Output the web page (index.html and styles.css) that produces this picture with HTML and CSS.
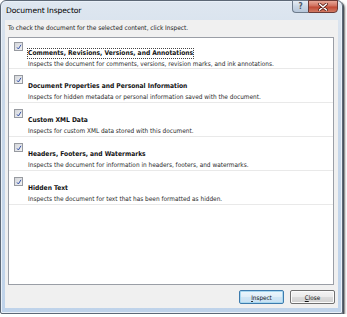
FILE: index.html
```html
<!DOCTYPE html>
<html>
<head>
  <meta charset="utf-8">
  <link rel="stylesheet" href="styles.css">
</head>
<body>
  <div class="window">
    <!-- Title bar -->
    <div class="titlebar">
      <span class="caption">Document Inspector</span>
      <div class="caption-buttons">
        <span class="cap-btn help">?</span>
        <span class="cap-btn close">
          <svg width="10" height="8" viewBox="0 0 10 8">
            <path d="M1.5 1 L8.5 7 M8.5 1 L1.5 7" stroke="#5a1c14" stroke-width="3" stroke-linecap="round"/>
            <path d="M1.5 1 L8.5 7 M8.5 1 L1.5 7" stroke="#fff" stroke-width="1.6" stroke-linecap="round"/>
          </svg>
        </span>
      </div>
    </div>

    <div class="client">
      <p class="intro">To check the document for the selected content, click Inspect.</p>

      <div class="listbox">
        <div class="item">
          <span class="check"><svg width="6" height="6" viewBox="0 0 6 6"><path d="M1 3.4 L2.4 5 L5 0.8" fill="none" stroke="#3552a8" stroke-width="1"/></svg></span>
          <div class="item-text">
            <div class="name focused">Comments, Revisions, Versions, and Annotations</div>
            <div class="desc">Inspects the document for comments, versions, revision marks, and ink annotations.</div>
          </div>
        </div>
        <div class="item">
          <span class="check"><svg width="6" height="6" viewBox="0 0 6 6"><path d="M1 3.4 L2.4 5 L5 0.8" fill="none" stroke="#3552a8" stroke-width="1"/></svg></span>
          <div class="item-text">
            <div class="name">Document Properties and Personal Information</div>
            <div class="desc">Inspects for hidden metadata or personal information saved with the document.</div>
          </div>
        </div>
        <div class="item">
          <span class="check"><svg width="6" height="6" viewBox="0 0 6 6"><path d="M1 3.4 L2.4 5 L5 0.8" fill="none" stroke="#3552a8" stroke-width="1"/></svg></span>
          <div class="item-text">
            <div class="name">Custom XML Data</div>
            <div class="desc">Inspects for custom XML data stored with this document.</div>
          </div>
        </div>
        <div class="item">
          <span class="check"><svg width="6" height="6" viewBox="0 0 6 6"><path d="M1 3.4 L2.4 5 L5 0.8" fill="none" stroke="#3552a8" stroke-width="1"/></svg></span>
          <div class="item-text">
            <div class="name">Headers, Footers, and Watermarks</div>
            <div class="desc">Inspects the document for information in headers, footers, and watermarks.</div>
          </div>
        </div>
        <div class="item">
          <span class="check"><svg width="6" height="6" viewBox="0 0 6 6"><path d="M1 3.4 L2.4 5 L5 0.8" fill="none" stroke="#3552a8" stroke-width="1"/></svg></span>
          <div class="item-text">
            <div class="name">Hidden Text</div>
            <div class="desc">Inspects the document for text that has been formatted as hidden.</div>
          </div>
        </div>
      </div>

      <div class="buttons">
        <button class="btn default"><u>I</u>nspect</button>
        <button class="btn"><u>C</u>lose</button>
      </div>
    </div>
  </div>
</body>
</html>
```

FILE: styles.css
```css
body {
  margin: 0;
  background: #fff;
  font-family: "DejaVu Sans Condensed", "DejaVu Sans", sans-serif;
}

.window {
  width: 343px;
  height: 314px;
  box-sizing: border-box;
  padding: 0 4px 5px 4px;
  border: 1px solid #5d6876;
  border-radius: 6px 6px 2px 2px;
  background: linear-gradient(#dfe7f0, #c9d8e9 30%, #bfd3ea);
  box-shadow: inset 0 0 0 1px #e9f0f8, 1px 1px 0 #4a525c, 2px 2px 2px rgba(0, 0, 0, 0.55);
  display: flex;
  flex-direction: column;
}

/* Title bar */
.titlebar {
  height: 19px;
  display: flex;
  align-items: flex-start;
  justify-content: space-between;
}

.caption {
  font-family: "DejaVu Sans", sans-serif;
  font-size: 7.6px;
  color: #000;
  line-height: 19px;
  padding-left: 1px;
  letter-spacing: -0.1px;
}

.caption-buttons {
  display: flex;
  margin-top: -1px;
}

.cap-btn {
  height: 13px;
  display: flex;
  align-items: center;
  justify-content: center;
  box-sizing: border-box;
  border: 1px solid #6e7c8c;
}

.help {
  width: 16px;
  border-right: none;
  border-radius: 0 0 0 4px;
  background: linear-gradient(#e6edf5, #c9d6e4 50%, #b7c7da);
  font-size: 8px;
  color: #4c5868;
  font-weight: bold;
}

.close {
  width: 30px;
  border-color: #6b3a36;
  border-radius: 0 0 4px 0;
  background: linear-gradient(#e8a898, #d0705e 45%, #c04a35 55%, #d27a64);
}

/* Client area */
.client {
  flex: 1;
  background: #f0f0f0;
  padding: 0 4px 4px 3px;
  display: flex;
  flex-direction: column;
}

.intro {
  margin: 0;
  line-height: 17px;
  font-size: 6.45px;
  color: #1a1a1a;
}

.listbox {
  height: 248px;
  box-sizing: border-box;
  background: #fff;
  border: 1px solid #9a9ea6;
}

.item {
  height: 34px;
  box-sizing: border-box;
  padding: 4px 0 0 5px;
  border-bottom: 1px solid #e9e9e9;
  display: flex;
  align-items: flex-start;
  gap: 4px;
}

.item:first-child {
  height: 31px;
  padding-top: 2px;
}

.check {
  width: 9px;
  height: 9px;
  box-sizing: border-box;
  margin-top: 2px;
  border: 1px solid #979aa0;
  background: linear-gradient(135deg, #d4d6da, #f2f3f5);
  display: flex;
  align-items: center;
  justify-content: center;
}

.name {
  font-size: 6.65px;
  font-weight: bold;
  line-height: 12px;
  height: 12px;
  color: #111;
  display: inline-block;
  padding: 0 1px;
  box-sizing: border-box;
}

.name.focused {
  outline: 1px dotted #444;
  outline-offset: -1px;
  line-height: 11px;
  height: 11px;
}

.desc {
  font-size: 6.45px;
  line-height: 11px;
  color: #2b2b2b;
  padding-left: 1px;
}

/* Buttons */
.buttons {
  margin-top: 5px;
  display: flex;
  justify-content: flex-end;
  gap: 6px;
  margin-right: -1px;
}

.btn {
  width: 45px;
  height: 14px;
  padding: 0;
  border: 1px solid #707070;
  border-radius: 2px;
  background: linear-gradient(#f4f4f4, #ebebeb 50%, #dcdcdc 51%, #cfcfcf);
  font-family: "DejaVu Sans Condensed", "DejaVu Sans", sans-serif;
  font-size: 6.3px;
  color: #111;
  box-shadow: inset 0 0 0 1px #fbfbfb;
}

.btn.default {
  border-color: #3d7bad;
  background: linear-gradient(#eaf6fd, #e0eef8 50%, #cfe6f5 51%, #c8e0f2);
  box-shadow: inset 0 0 0 1px #a8d8f0;
}
```
